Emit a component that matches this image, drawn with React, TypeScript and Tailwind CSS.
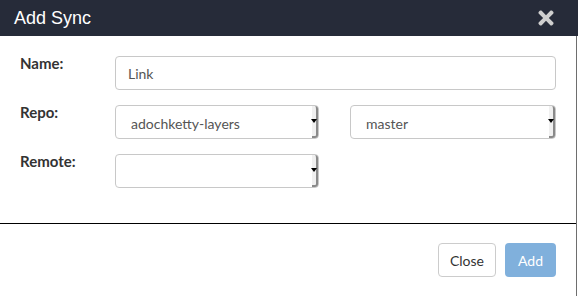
import { FaTimes } from "react-icons/fa";

const FakeSelect = ({ value, className }: { value?: string; className?: string }) => {
    return (
        <div className={`relative h-[34px] rounded border border-[#c8c8c8] bg-white ${className}`}>
            <span className="absolute left-[15px] top-[7px] text-[14px] text-[#555]">{value}</span>
            {/* native-looking dropdown arrow strip */}
            <div className="absolute right-0 top-0 bottom-0 w-[6px] rounded-r-[3px] bg-[#f0f0f0] border-r-2 border-b-2 border-[#8a8a8a] flex items-center justify-center">
                <div className="w-0 h-0 border-l-[3px] border-r-[3px] border-t-[4px] border-l-transparent border-r-transparent border-t-black" />
            </div>
        </div>
    );
};

const App = () => {
    return (
        <div className="w-[578px] h-[296px] bg-white flex flex-col font-['Lato',sans-serif]">
            <div className="h-[36px] bg-[#262b39] flex items-center justify-between pl-[14px] pr-[21px]">
                <span className="text-white text-[18px] font-['Liberation_Sans',Arial,sans-serif]">Add Sync</span>
                <FaTimes className="text-[#cfcfcf]" size={22} />
            </div>
            <div className="flex-1 flex flex-col w-[577px] border-r border-[#6e6e6e]">
                <div className="pt-[20px] pb-[35px] pl-[20px] pr-[20px] border-b border-black flex flex-col gap-[15px]">
                    <div className="flex">
                        <label className="w-[95px] leading-none text-[15px] font-bold text-[#333]">Name:</label>
                        <div className="flex-1 h-[34px] rounded border border-[#c8c8c8] flex items-center pl-[12px] text-[14px] text-[#555]">
                            Link
                        </div>
                    </div>
                    <div className="flex">
                        <label className="w-[95px] leading-none text-[15px] font-bold text-[#333]">Repo:</label>
                        <div className="flex-1 flex gap-[31px]">
                            <FakeSelect value="adochketty-layers" className="w-[204px]" />
                            <FakeSelect value="master" className="flex-1" />
                        </div>
                    </div>
                    <div className="flex">
                        <label className="w-[95px] leading-none text-[15px] font-bold text-[#333]">Remote:</label>
                        <FakeSelect className="w-[204px]" />
                    </div>
                </div>
                <div className="flex-1 flex items-center justify-end gap-[9px] pr-[20px]">
                    <button className="h-[34px] px-[11px] rounded border border-[#ccc] bg-white text-[14px] text-[#333]">Close</button>
                    <button className="h-[34px] px-[13px] rounded bg-[#80b0dc] text-[14px] text-white">Add</button>
                </div>
            </div>
        </div>
    );
};

export default App;
